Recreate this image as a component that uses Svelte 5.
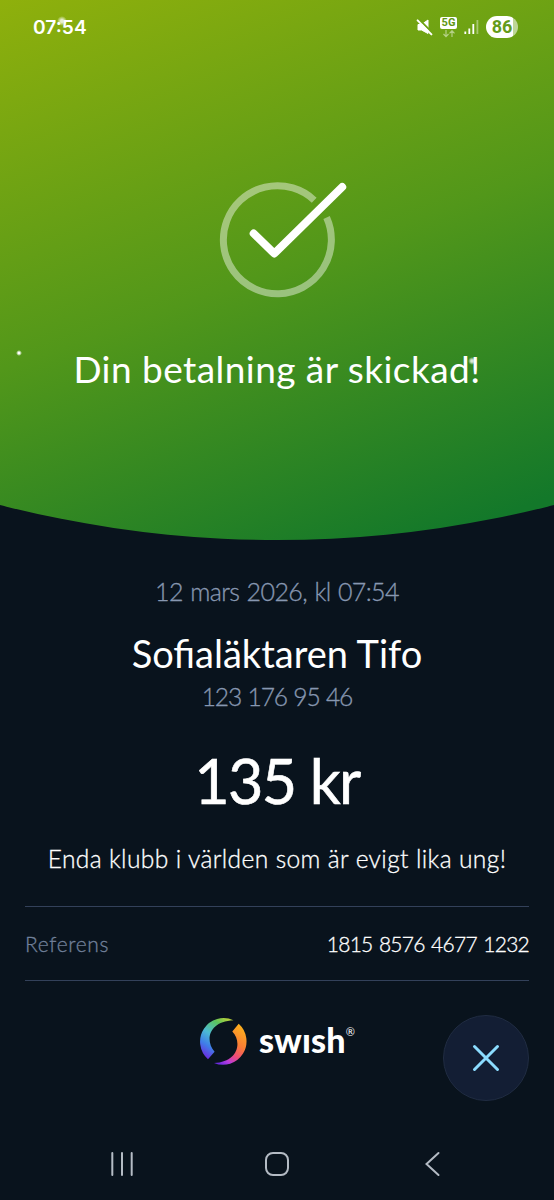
<script lang="ts">
	const payment = {
		date: '12 mars 2026, kl 07:54',
		name: 'Sofialäktaren Tifo',
		phone: '123 176 95 46',
		amount: '135 kr',
		message: 'Enda klubb i världen som är evigt lika ung!',
		reference: '1815 8576 4677 1232'
	};

	let { time = '07:54', battery = 86 }: { time?: string; battery?: number } = $props();
</script>

<div class="screen">
	<header class="hero">
		<div class="status-bar">
			<span class="time">{time}</span>
			<div class="status-icons">
				<svg class="mute" width="17" height="18" viewBox="0 0 17 18">
					<path d="M2 6.5H5.5L12 2V15.5L5.5 12H2Z" fill="#fff" stroke="#fff" stroke-linejoin="round" />
					<path d="M2.6 1L16.6 15" stroke="#6fa313" stroke-width="2" />
					<path d="M1.6 2.4L15.4 16.4" stroke="#fff" stroke-width="2" stroke-linecap="round" />
				</svg>
				<div class="network">
					<span class="five-g">5G</span>
					<svg width="12" height="8" viewBox="0 0 12 8" fill="none" stroke="#b5d187" stroke-width="1.2">
						<path d="M3 0V6.5M.5 4L3 6.6L5.5 4M9 7V.8M6.5 3.3L9 .7L11.5 3.3" />
					</svg>
				</div>
				<svg class="signal" width="15" height="16" viewBox="0 0 15 16" stroke="#fff" stroke-width="1.8">
					<path d="M1.3 12.5V15M5.3 9.5V15M9.3 5V15" />
					<path d="M13.4 1V15" stroke-opacity=".4" />
				</svg>
				<span class="battery">{battery}</span>
			</div>
		</div>

		<svg class="check" width="130" height="120" viewBox="0 0 130 120" fill="none">
			<path
				d="M95.2 21.2A54 54 0 1 0 107.6 38.5"
				stroke="#fff"
				stroke-opacity=".43"
				stroke-width="7"
			/>
			<path
				d="M34.7 54.5L55.3 74.5L123.2 8"
				stroke="#fff"
				stroke-width="8"
				stroke-linecap="round"
				stroke-linejoin="round"
			/>
		</svg>
		<h1>Din betalning är skickad!</h1>

		<i class="spark spark-time"></i>
		<i class="spark spark-left"></i>
		<i class="spark spark-title"></i>
	</header>

	<main>
		<p class="date">{payment.date}</p>
		<h2>{payment.name}</h2>
		<p class="phone">{payment.phone}</p>
		<p class="amount">{payment.amount}</p>
		<p class="message">{payment.message}</p>
		<div class="reference">
			<span class="label">Referens</span>
			<span class="number">{payment.reference}</span>
		</div>
	</main>

	<footer>
		<div class="brand" aria-label="Swish">
			<svg width="48" height="48" viewBox="0 0 48 48">
				<defs>
					<linearGradient id="cool" x1=".8" y1="0" x2=".25" y2="1">
						<stop offset="0" stop-color="#b5cf3a" />
						<stop offset=".2" stop-color="#5cc45c" />
						<stop offset=".5" stop-color="#4cbbd3" />
						<stop offset=".75" stop-color="#3f7fe8" />
						<stop offset="1" stop-color="#6a2de0" />
					</linearGradient>
					<linearGradient id="warm" x1=".75" y1="0" x2=".2" y2="1">
						<stop offset="0" stop-color="#fcb01c" />
						<stop offset=".4" stop-color="#fa7c35" />
						<stop offset=".65" stop-color="#ee4b78" />
						<stop offset=".85" stop-color="#b63be0" />
						<stop offset="1" stop-color="#6a2be0" />
					</linearGradient>
				</defs>
				<path d="M33.5 2.3A23.5 23.5 0 0 0 8 41.2L14.6 33.8C4.5 22 9 3.5 33.5 2.3Z" fill="url(#cool)" />
				<path d="M38.7 5.8A23.5 23.5 0 0 1 14 45C38 44.5 42.5 24 32.3 13.6Z" fill="url(#warm)" />
			</svg>
			<span class="wordmark">swısh</span>
			<span class="registered">®</span>
		</div>
		<button class="close" aria-label="Stäng">
			<svg width="28" height="28" viewBox="0 0 28 28" stroke="#8bdcff" stroke-width="3" stroke-linecap="round">
				<path d="M2.5 2.5L25.5 25.5M25.5 2.5L2.5 25.5" />
			</svg>
		</button>
	</footer>

	<nav>
		<svg width="24" height="26" viewBox="0 0 24 26">
			<path d="M2.3 2V24M12 2V24M21.7 2V24" />
		</svg>
		<svg width="26" height="26" viewBox="0 0 26 26">
			<rect x="2" y="2" width="22" height="22" rx="7" />
		</svg>
		<svg width="24" height="26" viewBox="0 0 24 26">
			<path d="M18.5 2L6.5 13L18.5 24" />
		</svg>
	</nav>
</div>

<style>
	:global(body) {
		background: #09131d;
	}

	.screen {
		width: 554px;
		height: 1200px;
		display: flex;
		flex-direction: column;
		background: #09131d;
		color: #fff;
		font-family: Lato, 'Open Sans', sans-serif;
		overflow: hidden;
	}

	h1,
	h2,
	p {
		margin: 0;
		white-space: nowrap;
	}

	.hero {
		position: relative;
		height: 541px;
		display: flex;
		flex-direction: column;
		align-items: center;
		background: linear-gradient(160deg, #8fb00c 0%, #52971a 50%, #13782a 94%, #13782a 100%);
		clip-path: circle(1113px at 50% -573px);
	}

	.status-bar {
		box-sizing: border-box;
		width: 100%;
		height: 54px;
		padding: 0 36px 0 33px;
		display: flex;
		align-items: center;
		justify-content: space-between;
		font-family: Inter, sans-serif;
	}

	.time {
		font-size: 19.2px;
		font-weight: 600;
	}

	.status-icons {
		display: flex;
		align-items: center;
		gap: 7px;
	}

	.network {
		display: flex;
		flex-direction: column;
		align-items: center;
		gap: 1px;
	}

	.five-g {
		width: 17px;
		height: 12px;
		border-radius: 2px;
		background: #fff;
		color: #5f9713;
		font-family: Roboto, sans-serif;
		font-size: 11px;
		font-weight: 700;
		line-height: 12px;
		text-align: center;
	}

	.battery {
		width: 32px;
		height: 22px;
		border-radius: 11px;
		background: linear-gradient(90deg, #fff 85%, #bdd697 85%);
		color: #649b1a;
		font-family: Roboto, sans-serif;
		font-size: 18px;
		font-weight: 700;
		line-height: 22px;
		text-align: center;
	}

	.check {
		margin-top: 125px;
		margin-left: 14px;
	}

	h1 {
		margin-top: 48px;
		font-size: 37px;
		font-weight: 400;
		line-height: 44px;
		letter-spacing: 0.45px;
	}

	.spark {
		position: absolute;
		border-radius: 50%;
		background: radial-gradient(circle, #fff 20%, transparent 70%);
	}

	.spark-time {
		left: 57px;
		top: 16px;
		width: 10px;
		height: 10px;
		opacity: 0.8;
	}

	.spark-left {
		left: 16px;
		top: 350px;
		width: 6px;
		height: 6px;
	}

	.spark-title {
		left: 468px;
		top: 357px;
		width: 8px;
		height: 8px;
		opacity: 0.8;
	}

	main {
		padding: 36px 25px 0;
		text-align: center;
	}

	.date,
	.phone {
		color: #8797b1;
		font-weight: 300;
		line-height: 30px;
		-webkit-text-stroke: 0.3px currentColor;
	}

	.date {
		font-size: 25px;
		letter-spacing: -0.6px;
		word-spacing: 1.1px;
	}

	h2 {
		margin-top: 25px;
		font-size: 38px;
		font-weight: 400;
		line-height: 44px;
	}

	.phone {
		margin-top: 7px;
		font-size: 24.6px;
		letter-spacing: -1.2px;
		word-spacing: 1.1px;
	}

	.amount {
		margin-top: 34px;
		font-size: 61px;
		font-weight: 400;
		line-height: 70px;
		letter-spacing: -1.6px;
		-webkit-text-stroke: 0.6px currentColor;
	}

	.message {
		margin-top: 28px;
		font-size: 24.6px;
		font-weight: 300;
		line-height: 30px;
		letter-spacing: 0.37px;
		-webkit-text-stroke: 0.3px currentColor;
	}

	.reference {
		box-sizing: border-box;
		height: 75px;
		margin-top: 32px;
		display: flex;
		align-items: center;
		justify-content: space-between;
		border-top: 1px solid #33415a;
		border-bottom: 1px solid #33415a;
		font-size: 21px;
		font-weight: 300;
		line-height: 30px;
		-webkit-text-stroke: 0.3px currentColor;
	}

	.label {
		color: #71809a;
		letter-spacing: 0.65px;
	}

	.number {
		letter-spacing: -0.75px;
		word-spacing: 1.5px;
	}

	footer {
		position: relative;
		height: 146px;
	}

	.brand {
		display: flex;
		padding: 37px 0 0 200px;
	}

	.wordmark {
		margin-left: 11px;
		font-size: 34px;
		font-weight: 900;
		line-height: 44px;
		letter-spacing: 0.2px;
	}

	.registered {
		margin-top: 7px;
		font-size: 11px;
		line-height: 14px;
	}

	.close {
		position: absolute;
		right: 25px;
		top: 34px;
		width: 86px;
		height: 86px;
		padding: 0;
		display: grid;
		place-items: center;
		border: 1px solid #202c42;
		border-radius: 50%;
		background: #131e34;
	}

	nav {
		height: 73px;
		display: flex;
		align-items: center;
		justify-content: space-between;
		padding: 0 110px;
		fill: none;
		stroke: #b4bbc4;
		stroke-width: 2;
		stroke-linecap: round;
	}
</style>
